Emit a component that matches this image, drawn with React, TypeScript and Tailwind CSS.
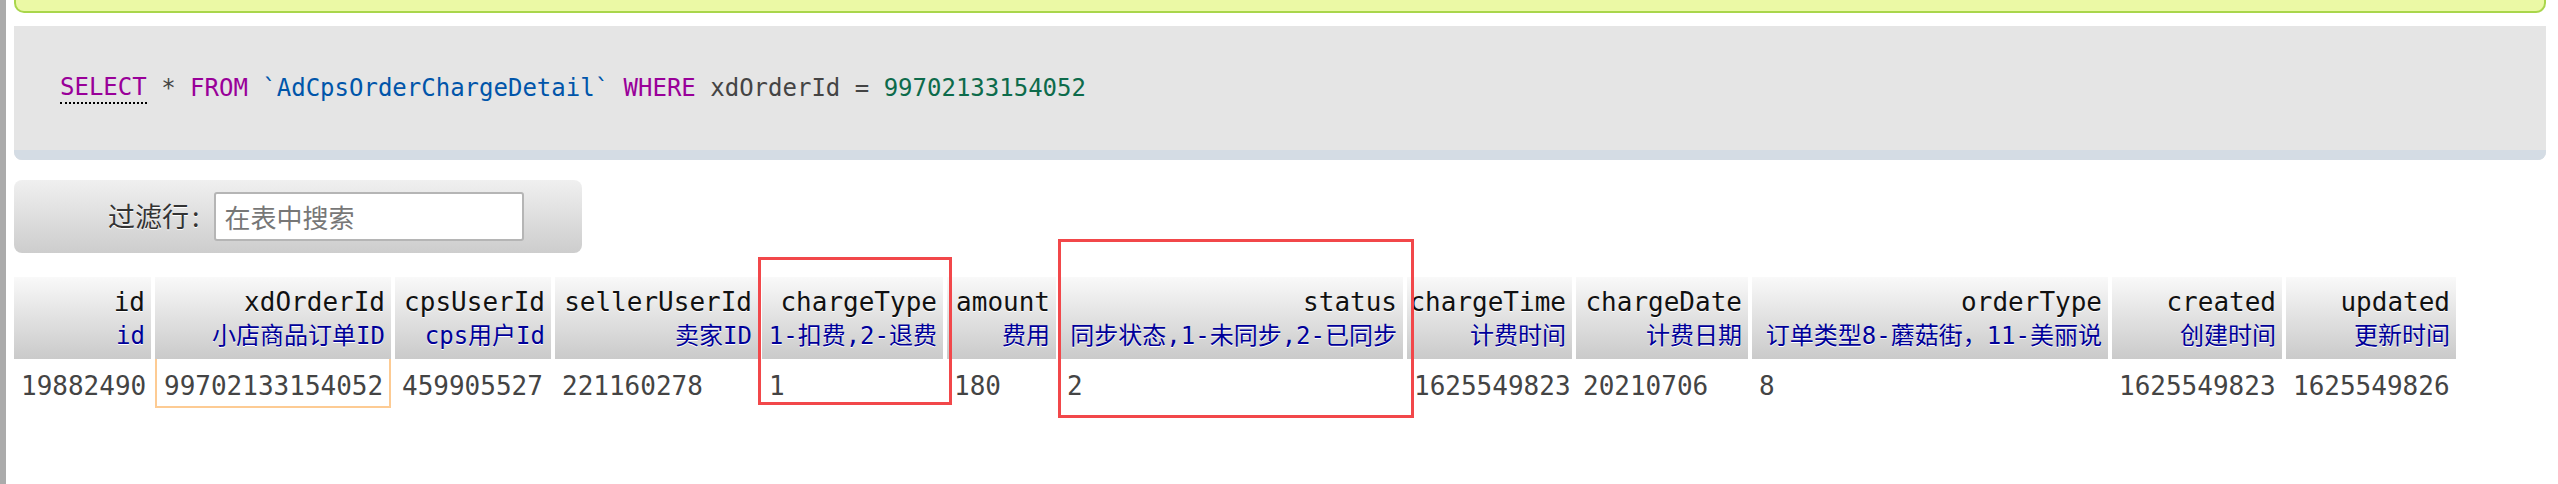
import React from 'react';

const columns = [
  { name: 'id', comment: 'id', value: '19882490', w: 'w-[137px]' },
  { name: 'xdOrderId', comment: '小店商品订单ID', value: '99702133154052', w: 'w-[236px]', hl: true },
  { name: 'cpsUserId', comment: 'cps用户Id', value: '459905527', w: 'w-[156px]' },
  { name: 'sellerUserId', comment: '卖家ID', value: '221160278', w: 'w-[203px]' },
  { name: 'chargeType', comment: '1-扣费,2-退费', value: '1', w: 'w-[181px]' },
  { name: 'amount', comment: '费用', value: '180', w: 'w-[109px]' },
  { name: 'status', comment: '同步状态,1-未同步,2-已同步', value: '2', w: 'w-[343px]' },
  { name: 'chargeTime', comment: '计费时间', value: '1625549823', w: 'w-[165px]' },
  { name: 'chargeDate', comment: '计费日期', value: '20210706', w: 'w-[172px]' },
  { name: 'orderType', comment: '订单类型8-蘑菇街，11-美丽说', value: '8', w: 'w-[356px]' },
  { name: 'created', comment: '创建时间', value: '1625549823', w: 'w-[170px]' },
  { name: 'updated', comment: '更新时间', value: '1625549826', w: 'w-[170px]' },
];

const mono = "font-['DejaVu_Sans_Mono','Noto_Sans_CJK_SC',monospace]";

export default function App() {
  return (
    <div className={`relative h-[484px] w-[2558px] overflow-hidden bg-white ${mono}`}>
      <div className="flex h-full">
        <div className="w-[6px] shrink-0 bg-[#ababab]" />
        <div className="ml-[8px] flex w-[2532px] flex-col">
          {/* message box tail */}
          <div className="h-[13px] rounded-b-[10px] border-2 border-t-0 border-[#a9d64b] bg-[#ebf9a5]" />

          {/* sql query */}
          <div className="mt-[13px] flex h-[134px] flex-col rounded-b-[8px] bg-[#e5e5e5]">
            <div className="flex flex-1 items-center pl-[46px] text-[24px] leading-[30px] text-[#444]">
              <span className="border-b-2 border-dotted border-black text-[#990099]">SELECT</span>
              <span className="whitespace-pre"> * </span>
              <span className="text-[#990099]">FROM</span>
              <span className="whitespace-pre"> </span>
              <span className="text-[#0055aa]">`AdCpsOrderChargeDetail`</span>
              <span className="whitespace-pre"> </span>
              <span className="text-[#990099]">WHERE</span>
              <span className="whitespace-pre"> xdOrderId = </span>
              <span className="text-[#0d6b4b]">99702133154052</span>
            </div>
            <div className="h-[10px] rounded-b-[8px] bg-[#d4dce4]" />
          </div>

          {/* filter */}
          <div className="mt-[20px] flex h-[73px] w-[568px] items-center rounded-[8px] bg-gradient-to-b from-[#f0f0f0] to-[#cdcdcd] pl-[94px] font-['Noto_Sans_CJK_SC',sans-serif]">
            <span className="text-[27px] text-[#333] [text-shadow:0_1px_0_#fff]">
              过滤行<span className="ml-[3px]">:</span>
            </span>
            <input
              placeholder="在表中搜索"
              className="ml-[14px] h-[49px] w-[310px] rounded-[3px] border-2 border-[#b5b5b5] bg-white px-[9px] text-[26px] text-[#333] placeholder:text-[#777] outline-none"
            />
          </div>

          {/* result table */}
          <div className="mt-[24px] flex gap-x-[4px]">
            {columns.map((c) => (
              <div key={c.name} className={`${c.w} shrink-0 flex flex-col`}>
                <div className="flex h-[82px] flex-col items-end bg-gradient-to-b from-[#f9f9f9] to-[#cacaca] pt-[8px] pr-[6px] whitespace-nowrap [text-shadow:0_1px_0_#fff]">
                  <div className="text-[26px] leading-[34px] text-[#111]">{c.name}</div>
                  <div className="text-[24px] leading-[34px] text-[#000099]">{c.comment}</div>
                </div>
                <div
                  className={`h-[49px] whitespace-nowrap pt-[10px] pl-[7px] text-[26px] leading-[34px] text-[#444] ${
                    c.hl ? 'border-2 border-t-0 border-[#fdcb93]' : ''
                  }`}
                >
                  {c.value}
                </div>
              </div>
            ))}
          </div>
        </div>
      </div>

      {/* annotation boxes */}
      <div className="absolute left-[758px] top-[257px] h-[148px] w-[194px] border-[3px] border-[#f2474a]" />
      <div className="absolute left-[1058px] top-[239px] h-[179px] w-[356px] border-[3px] border-[#f2474a]" />
    </div>
  );
}
